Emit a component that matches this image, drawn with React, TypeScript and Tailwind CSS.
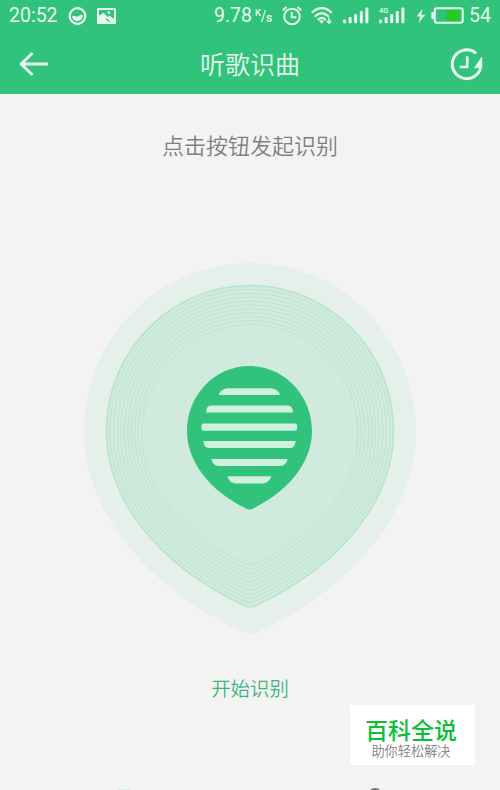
import React from "react";

const cjk = "font-['Noto_Sans_CJK_SC',sans-serif]";

// Drop-shaped outline centred on x = 0, widest at y = 0, unit radius.
const DROP =
  "M0 -1C0.552 -1 1 -0.552 1 0C1 0.44 0.68 0.9 0.05 1.195Q0 1.22 -0.05 1.195C-0.68 0.9 -1 0.44 -1 0C-1 -0.552 -0.552 -1 0 -1Z";

const RINGS = Array.from({ length: 11 }, (_, i) => i / 10);

function Signal() {
  return (
    <svg className="block" width="26" height="17" viewBox="0 0 26 17" fill="#e6faef">
      <rect x="0" y="12.5" width="3" height="3.8" rx="1" />
      <rect x="5.6" y="10" width="3" height="6.3" rx="1" />
      <rect x="11.2" y="7" width="3" height="9.3" rx="1" />
      <rect x="16.8" y="4" width="3" height="12.3" rx="1" />
      <rect x="22.4" y="0.5" width="3" height="15.8" rx="1" />
    </svg>
  );
}

function StatusBar() {
  return (
    <div className="flex h-8 items-center pl-[9px] pr-[9px] font-[Roboto,sans-serif] text-[19.5px] leading-8 text-[#e6faef]">
      <span className="w-[50px]">20:52</span>
      <svg className="ml-[9px]" width="19" height="19" viewBox="0 0 19 19" fill="none">
        <circle cx="9.5" cy="9" r="7.8" stroke="#e6faef" strokeWidth="2.3" />
        <path d="M4.2 9C6 7.7 7.6 10.5 10 9.3C12 8.3 13 7.5 14.8 8.3C14.8 12 12.5 14 9.5 14C6.5 14 4.2 12 4.2 9Z" fill="#e6faef" />
      </svg>
      <svg className="-mt-[1px] ml-[10px]" width="19" height="16" viewBox="0 0 19 16">
        <rect width="19" height="16" rx="1" fill="#e6faef" />
        <path d="M2 2H17V11L12.5 7.6L10.8 8.9L6.5 4.8L2 7.8Z" fill="#31c27c" />
        <circle cx="11.8" cy="4.6" r="1.3" fill="#e6faef" />
        <path d="M9.2 10.2L13.5 13.8H11.7L8.2 11Z" fill="#31c27c" />
      </svg>
      <span className="ml-[98px] w-[38px]">9.78</span>
      <span className="ml-[3px] flex h-[18px] w-[17px] items-start font-medium">
        <span className="w-[6px] text-[9.5px] leading-[11px]">K</span>
        <svg className="mt-[3px] shrink-0" width="5" height="12" viewBox="0 0 5 12" fill="#e6faef">
          <path d="M3.7 0H5L1.3 12H0Z" />
        </svg>
        <span className="mt-[4px] text-[12px] leading-[14px]">s</span>
      </span>
      <svg className="-mt-[1px] ml-[10px]" width="20" height="20" viewBox="0 0 20 20" fill="none" stroke="#e6faef" strokeWidth="2" strokeLinecap="round">
        <circle cx="10" cy="10.5" r="7.8" />
        <path d="M9.7 6.8V11.2H13.5M1.4 3.8L4 1.5M18.6 3.8L16 1.5" />
      </svg>
      <svg className="-mt-[2px] ml-[9px]" width="22" height="19" viewBox="0 0 22 19" fill="none" stroke="#e6faef" strokeWidth="2.2" strokeLinecap="round">
        <path d="M1.5 6.2C7 0.7 14.5 0.7 20 6.2M4.4 10C8.3 6.4 13 6.4 17 10M7.4 13.3C9.6 11.4 12 11.4 14 13.3" />
        <path d="M9 14.8H12.4L10.7 17Z" fill="#e6faef" strokeWidth="1" />
        <path d="M18 12V17M16.4 15.4L18 17.2L19.7 15.4" strokeWidth="1.5" />
      </svg>
      <span className="-mt-[2px] ml-[10px]"><Signal /></span>
      <span className="relative -mt-[2px] ml-[10px]">
        <Signal />
        <span className="absolute left-0 top-0 bg-[#31c27c] pb-px text-[7.5px] font-medium leading-[7px]">4G</span>
      </span>
      <svg className="ml-[11px]" width="10" height="14" viewBox="0 0 10 14" fill="#e6faef">
        <path d="M6.4 0L0.6 7.6H4.2L2.6 14L9.2 5.8H5.3Z" />
      </svg>
      <svg className="-mt-[1px] ml-[5px]" width="33" height="17" viewBox="0 0 33 17">
        <rect x="3.8" y="1.3" width="27.9" height="14.4" rx="2" fill="none" stroke="#e6faef" strokeWidth="2" />
        <rect x="0.3" y="5" width="2.8" height="7" rx="1" fill="#e6faef" />
        <rect x="15.5" y="3.2" width="13.5" height="10.6" fill="#24ca1c" />
      </svg>
      <span className="ml-auto">54</span>
    </div>
  );
}

function ListenButton() {
  return (
    <button className="mx-auto block" aria-label="开始识别">
      <svg width="332" height="373" viewBox="84 263 332 373">
        <path d={DROP} transform="translate(250 431) scale(166 168)" fill="#e4f0e9" />
        <path d={DROP} transform="translate(250 431) scale(144 146)" fill="#d0eadd" />
        {RINGS.map((t) => (
          <path
            key={t}
            d={DROP}
            transform={`translate(250 ${431 + t * 2.5}) scale(${143.5 - t * 35.5} ${145.5 - t * 36.5})`}
            fill="none"
            stroke="#b9e4cf"
            strokeWidth={t === 0 ? 1.6 : 0.9}
            vectorEffect="non-scaling-stroke"
          />
        ))}
        <path d={DROP} transform="translate(249.5 431) scale(62.5 65)" fill="#31c27c" />
        <g fill="#d0f1e0">
          <path d="M219 395C218.5 392 224 388.2 228 388.2H270C275 388.2 280 392 280 395Z" />
          <path d="M206 412.5C206 409 207.5 405.4 211 405.4H288C291.5 405.4 293 409 293 412.5Z" />
          <rect x="201.5" y="423.6" width="95.6" height="7.2" rx="2.2" />
          <path d="M203.5 441H295.5C295.5 445 293.5 448 290.5 448H208.5C205.5 448 203.5 445 203.5 441Z" />
          <path d="M211.5 459H287.5C287 463 284 466 280.5 466H218.5C215 466 212 463 211.5 459Z" />
          <path d="M227.5 476.2H271.2C270.5 480 266.5 483.4 263 483.4H235.5C232 483.4 228 480 227.5 476.2Z" />
        </g>
      </svg>
    </button>
  );
}

export default function App() {
  return (
    <div className={`relative flex h-[790px] w-[500px] flex-col overflow-hidden bg-[#f3f3f3] ${cjk}`}>
      <header className="h-[94px] shrink-0 bg-[#31c27c]">
        <StatusBar />
        <div className="flex h-[62px] items-center justify-between pl-[18px] pr-4 text-[#e6faef]">
          <svg className="mt-[2px]" width="32" height="26" viewBox="0 0 32 26" fill="none" stroke="currentColor" strokeWidth="3">
            <path d="M30 13H3M14.5 2L3.2 13L14.5 24" />
          </svg>
          <h1 className="text-[25px] font-[350] leading-[62px]">听歌识曲</h1>
          <svg className="mt-[3px]" width="34" height="34" viewBox="0 0 34 34" fill="none" stroke="currentColor">
            <path d="M26.2 5.4A14.4 14.4 0 1 0 30.8 19" strokeWidth="3" />
            <path d="M17.2 8.2V19H9.7" strokeWidth="2.6" />
            <path d="M31.8 9V19.2L24.5 20Z" fill="currentColor" strokeWidth="0.8" />
          </svg>
        </div>
      </header>
      <main className="flex flex-col">
        <p className="mt-[34px] h-8 text-center text-[22px] font-[350] leading-8 text-[#808080]">点击按钮发起识别</p>
        <div className="mt-[103px]">
          <ListenButton />
        </div>
        <p className="mt-[38px] h-7 text-center text-[19.4px] font-[350] leading-7 text-[#3fb57e]">开始识别</p>
      </main>
      <div className="absolute left-[350px] top-[705px] flex h-[60px] w-[125px] flex-col items-center bg-white">
        <span className="mt-[11px] h-[26px] pr-[3px] text-[23px] font-medium leading-[26px] text-[#0abf35]">百科全说</span>
        <span className="h-[18px] pr-[3px] text-[13.2px] font-[350] leading-[18px] text-[#808080]">助你轻松解决</span>
      </div>
      <div className="absolute left-[367px] top-[788px] h-4 w-4 rounded-full bg-[#777]" />
      <div className="absolute left-[118px] top-[789px] h-px w-3 bg-[#d9f0e6]" />
    </div>
  );
}
